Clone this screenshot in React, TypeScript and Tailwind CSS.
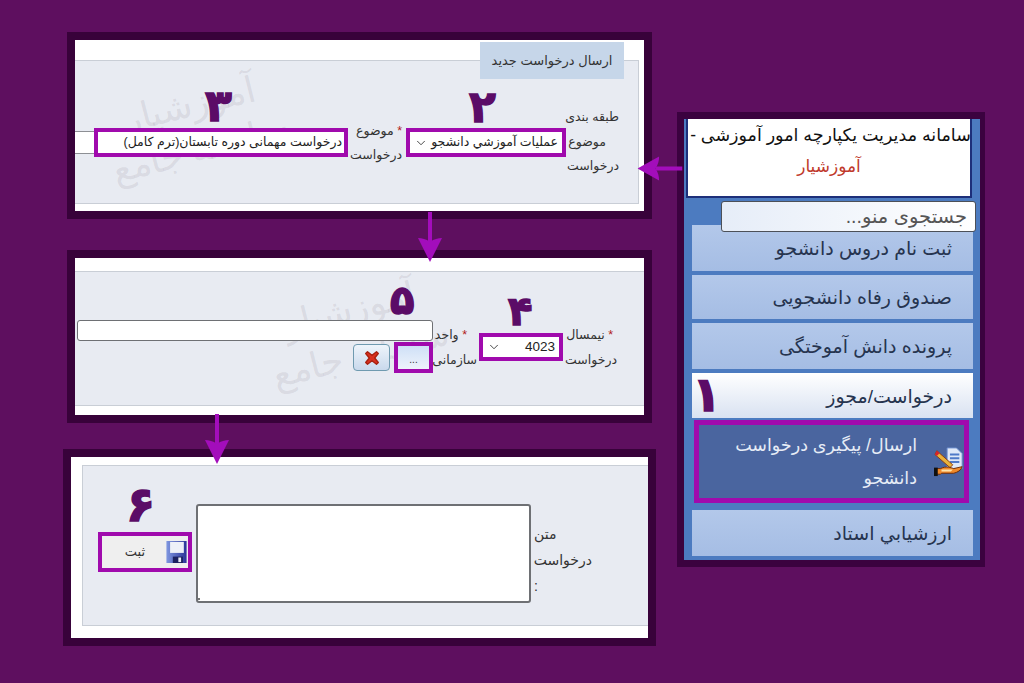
import { ChevronDown } from "lucide-react";

const menuItem =
  "h-[46px] w-[281px] ml-2 flex items-center justify-start pr-[21px] pt-[3px] text-[19px] text-[#26344f] bg-gradient-to-b from-[#b3c8ea] to-[#a5bde4]";

function Step({ label, className }: { label: string; className: string }) {
  return (
    <span
      className={`absolute z-20 font-bold leading-none text-[#5b0c67] [-webkit-text-stroke:1.5px_#5b0c67] ${className}`}
    >
      {label}
    </span>
  );
}

function Watermark({ className }: { className: string }) {
  return (
    <div
      dir="rtl"
      className={`absolute pointer-events-none leading-[46px] text-center text-[#7c6f80]/15 text-[36px] -rotate-[14deg] whitespace-nowrap font-['Liberation_Serif','DejaVu_Serif',serif] ${className}`}
    >
      <div>آموزشیار</div>
      <div>سامانه جامع</div>
    </div>
  );
}

function Arrow({ className }: { className: string }) {
  // drawn pointing down, rotate for the other direction
  return (
    <svg viewBox="0 0 26 50" preserveAspectRatio="none" className={`absolute z-30 w-[26px] ${className}`}>
      <path d="M11 0h4v30h-4z" fill="#a30dbb" />
      <path d="M1 26c4 0 8 1 12 4 4-3 8-4 12-4L13 50z" fill="#a30dbb" />
    </svg>
  );
}

function FloppyIcon() {
  return (
    <svg viewBox="0 0 22 24" className="w-[21px] h-[22px]">
      <defs>
        <linearGradient id="disk" x1="0" x2="1" y1="0" y2="0">
          <stop offset="0" stopColor="#7f97e0" />
          <stop offset="1" stopColor="#2b3499" />
        </linearGradient>
      </defs>
      <path d="M0 0h22v24H0z" fill="url(#disk)" />
      <path d="M4 1h15v12H4z" fill="#eef1f8" />
      <path d="M7 17h11v7H7z" fill="#1c2260" />
      <path d="M13 18h3v5h-3z" fill="#e8ecf6" />
    </svg>
  );
}

function RequestIcon() {
  return (
    <svg viewBox="0 0 32 34" className="w-[30px] h-[34px]">
      <path d="M14 2h10l6 6v16H14z" fill="#dfe8f8" stroke="#6d8fd0" />
      <path d="M17 9h10M17 13h10M17 17h10" stroke="#4f79c8" strokeWidth="2" />
      <path d="M3 5 20 20l-3 3L1 9z" fill="#e8b23a" stroke="#8a3a12" />
      <path d="M1 9l2-4 3 2.500-3 3z" fill="#d8232a" />
      <path d="M2 24h5c6-3 11-1 14 0l9-2c-1 4-5 6-9 7H8l-1 1H1z" fill="#f0892a" stroke="#6b2a08" />
      <path d="M8 25h12l-2 2H8z" fill="#ffe3a8" />
      <path d="M0 23h4v9H0z" fill="#101010" />
    </svg>
  );
}

export default function App() {
  return (
    <div className="relative flex w-[1024px] h-[683px] overflow-hidden bg-[#5e0f5f] text-[#333] text-[12.500px] font-['Liberation_Sans','DejaVu_Sans',sans-serif]">
      <div className="flex flex-col pl-[67px] pt-[32px] w-[652px] shrink-0">
        {/* step 2 and 3 */}
        <div className="relative w-[585px] h-[187px] border-8 border-[#38023a] bg-white pt-5">
          <div className="relative h-[144px] w-[564px] border border-[#c9ced6] border-l-0 bg-[#e8ebf2] overflow-hidden">
            <Watermark className="left-[30px] top-[20px]" />
            <div dir="rtl" className="relative flex items-start pr-[19px] pt-[44px]">
              <div className="w-[53px] leading-[24.500px] shrink-0 whitespace-nowrap">
                طبقه بندی
                <br />
                <span className="mr-[13px]">موضوع</span>
                <br />
                درخواست
              </div>
              <div className="w-[160px] h-[29px] mt-[23px] shrink-0 border-[4px] border-[#a00aad] bg-white flex items-center justify-between pr-1 pl-1 text-[#222]">
                <span>عملیات آموزشي دانشجو</span>
                <ChevronDown size={14} strokeWidth={1.4} />
              </div>
              <div className="w-[58px] mt-[14px] pr-1 leading-[24px] shrink-0 whitespace-nowrap">
                <span className="text-[#b02020]">*</span> موضوع
                <br />
                درخواست
              </div>
              <div className="w-[254px] h-[29px] mt-[23px] shrink-0 border-[4px] border-[#a00aad] bg-white flex items-center pr-0.5 text-[#222]">
                درخواست مهمانی دوره تابستان(ترم کامل)
              </div>
              <div className="w-[20px] h-[23px] mt-[26px] shrink-0 bg-white border-y border-[#8d8f94]" />
            </div>
          </div>
          <div className="absolute z-10 left-[405px] top-[2px] w-[144px] h-[37px] bg-[#c6d6e9] flex items-center justify-center text-[13px]">
            ارسال درخواست جدید
          </div>
        </div>

        {/* step 4 and 5 */}
        <div className="mt-[31px] w-[585px] h-[173px] border-8 border-[#38023a] bg-white py-[13px] pb-[10px]">
          <div className="relative h-[135px] border-y border-[#c9ced6] bg-[#e8ebf2] overflow-hidden">
            <Watermark className="left-[190px] top-[14px]" />
            <div dir="rtl" className="relative flex items-start pr-[27px] pt-[48px]">
              <div className="w-[54px] leading-[25px] pt-[3px] shrink-0 whitespace-nowrap">
                <span className="mr-[4px] text-[#b02020]">*</span> نیمسال
                <br />
                درخواست
              </div>
              <div className="w-[84px] h-[28px] mt-[13px] shrink-0 border-[4px] border-[#a00aad] bg-white flex items-center justify-between px-1 text-[13.500px] text-[#222]">
                <span dir="ltr">4023</span>
                <ChevronDown size={14} strokeWidth={1.4} />
              </div>
              <div className="w-[46px] pr-[12px] leading-[25px] pt-[3px] shrink-0 whitespace-nowrap">
                <span className="text-[#b02020]">*</span> واحد
                <br />
                <span className="-mr-[10px]">سازمانی</span>
              </div>
              <div className="flex flex-col items-start">
                <div className="w-[356px] h-[21px] bg-white border border-[#6e7074] rounded-[3px]" />
                <div className="flex items-center gap-1 mt-px">
                  <div className="w-[39px] h-[31px] border-[4px] border-[#a00aad] bg-gradient-to-b from-[#cfe0f7] to-[#eef3fb] flex items-end justify-center pb-1 text-[10px] leading-none">
                    ...
                  </div>
                  <div className="w-[37px] h-[27px] rounded-[4px] border border-[#6f9ab0] bg-gradient-to-b from-[#eef4fb] to-[#c9d9ec] flex items-center justify-center">
                    <svg viewBox="0 0 20 20" className="w-[18px] h-[18px]">
                      <path d="M3 5 5 3l5 4 5-4 2 2-4 5 4 5-2 2-5-4-5 4-2-2 4-5z" fill="#d9301f" stroke="#a8200f" strokeWidth="1.500" strokeLinejoin="round" />
                    </svg>
                  </div>
                </div>
              </div>
            </div>
          </div>
        </div>

        {/* step 6 */}
        <div className="mt-[26px] -ml-1 w-[593px] h-[197px] border-8 border-[#38023a] bg-white pt-2 pl-[11px]">
          <div dir="rtl" className="h-[161px] border border-r-0 border-[#c9ced6] bg-[#e8ebf2] flex items-start pr-[56px] pt-[38px]">
            <div className="w-[61px] shrink-0 pt-[17px] leading-[26px] text-[14px] text-left pl-[4px]">
              <div dir="rtl" className="w-[58px] whitespace-nowrap text-left">
                متن
                <br />
                درخواست
                <br />:
              </div>
            </div>
            <div className="relative w-[335px] h-[99px] shrink-0">
              <textarea
                dir="rtl"
                className="block w-full h-full resize-none bg-white border-2 border-[#6e7074] rounded-[3px]"
              />
              <span className="absolute left-[2px] bottom-[3px] w-[2px] h-[2px] bg-[#777]" />
            </div>
            <div className="w-[94px] h-[40px] shrink-0 mr-[4px] mt-[28px] border-[4px] border-[#a00aad] bg-[#efefef] flex items-center pr-[1px] gap-[21px] text-[13px]">
              <FloppyIcon />
              <span>ثبت</span>
            </div>
          </div>
        </div>
      </div>

      {/* menu */}
      <div className="ml-[25px] mt-[112px] w-[308px] h-[455px] shrink-0 border-y-[7px] border-l-[7px] border-r-[5px] border-[#3b023f]">
        <div dir="ltr" className="relative flex flex-col h-full bg-[#4c7bc0]">
          <div className="ml-0.5 w-[286px] h-[79px] shrink-0 bg-white border-x-2 border-b-2 border-[#1d2f7a] overflow-hidden text-center">
            <div dir="rtl" className="whitespace-nowrap text-[17.500px] text-[#111] leading-[30px] mt-[1px] -mr-[3px]">
              سامانه مدیریت یکپارچه امور آموزشی -
            </div>
            <div dir="rtl" className="text-[17px] text-[#c0392b] leading-[34px]">
              آموزشیار
            </div>
          </div>
          <input
            dir="rtl"
            placeholder="جستجوی منو..."
            className="relative z-10 mt-[3px] ml-[37px] w-[255px] h-[31px] shrink-0 rounded-[3px] border border-[#4c5058] bg-gradient-to-r from-[#e6edf8] to-white px-2 text-[19.500px] placeholder:text-[#555]"
          />
          <div dir="rtl" className={`${menuItem} -mt-[7px]`}>
            ثبت نام دروس دانشجو
          </div>
          <div dir="rtl" className={`${menuItem} mt-1 !h-[44px]`}>
            صندوق رفاه دانشجویی
          </div>
          <div dir="rtl" className={`${menuItem} mt-1`}>
            پرونده دانش آموختگی
          </div>
          <div dir="rtl" className="mt-1 ml-2 w-[281px] h-[45px] flex items-center pr-[21px] pt-[3px] text-[19px] text-[#26344f] bg-gradient-to-b from-white to-[#d9e2f1]">
            درخواست/مجوز
          </div>
          <div dir="rtl" className="mt-0.5 ml-2.5 w-[275px] h-[83px] border-[5px] border-[#a00aad] bg-[#4a659f] flex items-center pr-0 gap-[17px] text-[#e6ecf6] text-[17.500px] leading-[33px]">
            <RequestIcon />
            <div className="w-[215px]">ارسال/ پیگیری درخواست دانشجو</div>
          </div>
          <div dir="rtl" className={`${menuItem} mt-[7px]`}>
            ارزشيابي استاد
          </div>
        </div>
      </div>

      <Step label="۱" className="left-[692px] top-[371px] text-[48px]" />
      <Step label="۲" className="left-[469px] top-[85px] text-[44px]" />
      <Step label="۳" className="left-[205px] top-[84px] text-[44px]" />
      <Step label="۴" className="left-[508px] top-[291px] text-[40px]" />
      <Step label="۵" className="left-[390px] top-[280px] text-[40px]" />
      <Step label="۶" className="left-[126px] top-[481px] text-[48px]" />

      <Arrow className="left-[417px] top-[212px] h-[50px]" />
      <Arrow className="left-[204px] top-[414px] h-[50px]" />
      <Arrow className="left-[647px] top-[146px] h-[45px] rotate-90" />
    </div>
  );
}
